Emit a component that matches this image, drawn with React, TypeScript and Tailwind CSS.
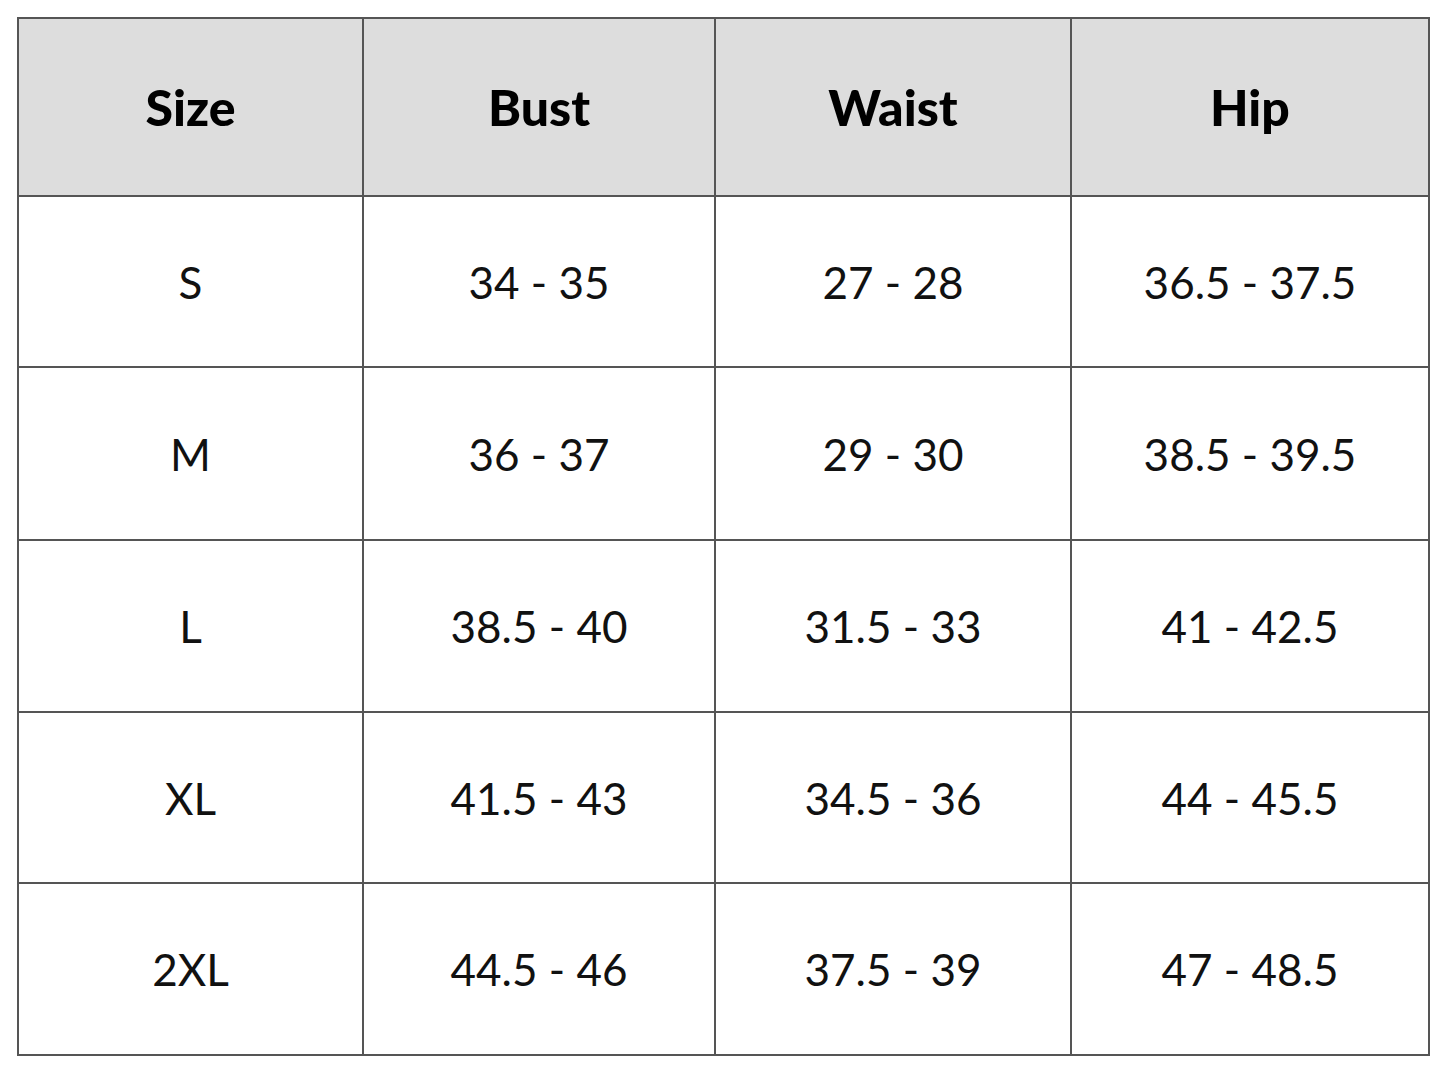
const header = ['Size', 'Bust', 'Waist', 'Hip']

const rows = [
  { h: 'h-[171px]', cells: ['S', '34 - 35', '27 - 28', '36.5 - 37.5'] },
  { h: 'h-[173px]', cells: ['M', '36 - 37', '29 - 30', '38.5 - 39.5'] },
  { h: 'h-[172px]', cells: ['L', '38.5 - 40', '31.5 - 33', '41 - 42.5'] },
  { h: 'h-[171px]', cells: ['XL', '41.5 - 43', '34.5 - 36', '44 - 45.5'] },
  { h: 'h-[172px]', cells: ['2XL', '44.5 - 46', '37.5 - 39', '47 - 48.5'] },
]

const widths = ['w-[345px]', 'w-[352px]', 'w-[356px]', 'w-[358px]']

export default function App() {
  return (
    <div className="h-[1084px] w-[1451px] bg-white pl-[17px] pt-[17px] font-['Lato',sans-serif] text-[#111]">
      <table className="border-collapse">
        <thead>
          <tr className="h-[178px] bg-[#dddddd]">
            {header.map((h, i) => (
              <th
                key={h}
                className={`${widths[i]} border-2 border-[#555555] text-center text-[50px] font-black text-black`}
              >
                {h}
              </th>
            ))}
          </tr>
        </thead>
        <tbody>
          {rows.map((r) => (
            <tr key={r.cells[0]} className={r.h}>
              {r.cells.map((c, i) => (
                <td
                  key={i}
                  className={`${widths[i]} border-2 border-[#555555] text-center text-[44px] font-normal`}
                >
                  {c}
                </td>
              ))}
            </tr>
          ))}
        </tbody>
      </table>
    </div>
  )
}
